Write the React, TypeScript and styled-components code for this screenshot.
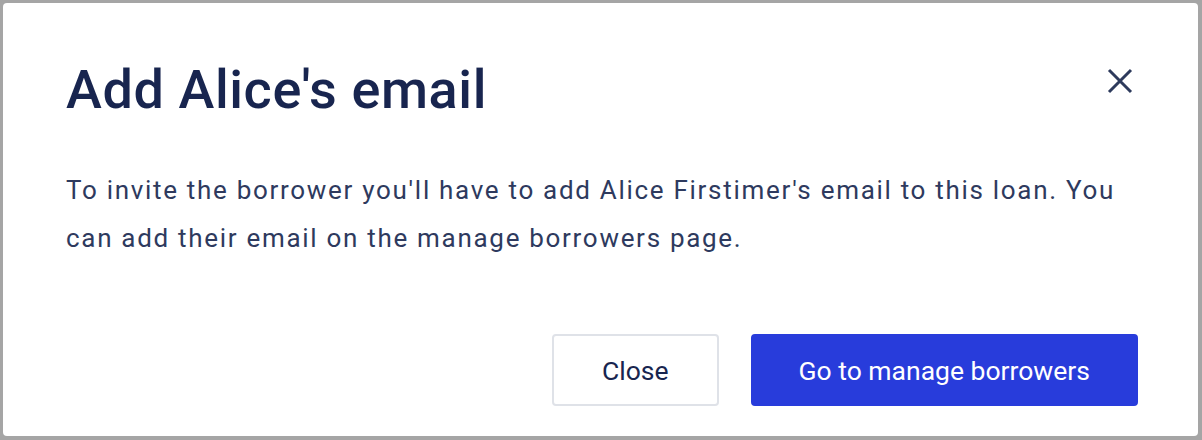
import React from "react";
import styled, { createGlobalStyle } from "styled-components";

const Global = createGlobalStyle`
  html, body { margin: 0; padding: 0; background: #a5a5a5; }
  body { font-family: Roboto, "Noto Sans", sans-serif; }
`;

const Frame = styled.div`
  box-sizing: border-box;
  width: 1202px;
  height: 440px;
  padding: 3px 4px 4px 3px;
`;

const Card = styled.div`
  box-sizing: border-box;
  height: 100%;
  background: #ffffff;
  border-radius: 4px;
  padding: 55px 60px 30px 63px;
  display: flex;
  flex-direction: column;
`;

const Header = styled.div`
  display: flex;
  justify-content: space-between;
  align-items: flex-start;
`;

const Title = styled.h1`
  margin: 0;
  font-size: 54px;
  line-height: 64px;
  font-weight: 500;
  letter-spacing: 0.6px;
  color: #18254f;
`;

const CloseIcon = styled.button`
  border: none;
  background: none;
  padding: 0;
  margin: 10px 5px 0 0;
  width: 26px;
  height: 26px;
  display: flex;
  align-items: center;
  justify-content: center;
  cursor: pointer;
`;

const Body = styled.p`
  margin: 44px 0 0 0;
  font-size: 26px;
  line-height: 48px;
  letter-spacing: 1.7px;
  color: #2e3a5e;
`;

const Actions = styled.div`
  margin-top: auto;
  display: flex;
  justify-content: flex-end;
  gap: 32px;
`;

const Button = styled.button<{ $primary?: boolean }>`
  box-sizing: border-box;
  height: 72px;
  padding: 0 ${(p) => (p.$primary ? "46px" : "48px")};
  border-radius: 4px;
  font-family: Roboto, sans-serif;
  font-size: 26.5px;
  font-weight: 400;
  cursor: pointer;
  border: 2px solid ${(p) => (p.$primary ? "#283cdb" : "#dfe2e8")};
  background: ${(p) => (p.$primary ? "#283cdb" : "#ffffff")};
  color: ${(p) => (p.$primary ? "#ffffff" : "#18254f")};
`;

export default function App() {
  return (
    <>
      <Global />
      <Frame>
        <Card>
          <Header>
            <Title>Add Alice's email</Title>
            <CloseIcon aria-label="Close">
              <svg width="26" height="26" viewBox="0 0 26 26">
                <path d="M2 2 L24 24 M24 2 L2 24" stroke="#2d3a5c" strokeWidth="3" />
              </svg>
            </CloseIcon>
          </Header>
          <Body>
            To invite the borrower you'll have to add Alice Firstimer's email to this loan. You can add their email on the manage borrowers page.
          </Body>
          <Actions>
            <Button>Close</Button>
            <Button $primary>Go to manage borrowers</Button>
          </Actions>
        </Card>
      </Frame>
    </>
  );
}
